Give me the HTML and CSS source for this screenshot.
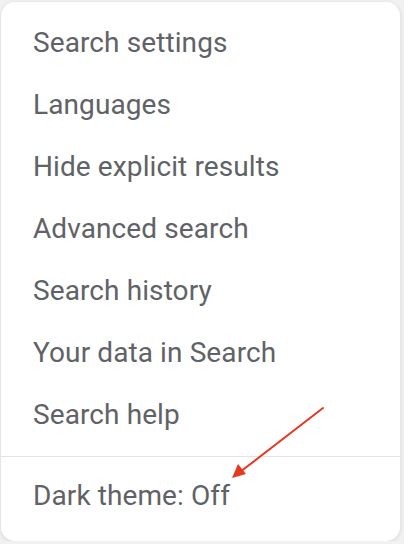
FILE: index.html
```html
<!DOCTYPE html>
<html>
  <head>
    <meta charset="utf-8" />
    <title>Search menu</title>
    <meta name="viewport" content="width=device-width, initial-scale=1" />
    <link rel="stylesheet" href="styles.css">
  </head>
  <body>
    <div class="menu">
      <ul class="menu-list">
        <li class="menu-item">Search settings</li>
        <li class="menu-item">Languages</li>
        <li class="menu-item">Hide explicit results</li>
        <li class="menu-item">Advanced search</li>
        <li class="menu-item">Search history</li>
        <li class="menu-item">Your data in Search</li>
        <li class="menu-item">Search help</li>
      </ul>
      <div class="menu-footer">
        <div class="menu-item">Dark theme: Off</div>
      </div>
      <!-- annotation arrow -->
      <svg class="arrow" width="404" height="544" viewBox="0 0 404 544">
        <line x1="323" y1="408" x2="240" y2="472" stroke="#e5381e" stroke-width="2" stroke-linecap="round" />
        <polygon points="232,478 238,464 246,474" fill="#e5381e" />
      </svg>
    </div>
  </body>
</html>
```

FILE: styles.css
```css
body {
  margin: 0;
  background-color: #f1f1f1;
  font-family: Roboto, "Noto Sans", sans-serif;
}
.menu {
  width: 399px;
  height: 539px;
  margin: 2px 0 0 1px;
  background-color: #fff;
  border-radius: 14px;
  box-shadow: 0 1px 4px rgba(0, 0, 0, 0.12);
  box-sizing: border-box;
}
.menu-list {
  list-style: none;
  margin: 0;
  padding: 10px 0 10px;
  border-bottom: 1px solid #e4e4e4;
}
.menu-item {
  height: 62px;
  line-height: 62px;
  padding-left: 32px;
  font-size: 28px;
  letter-spacing: 0.1px;
  color: #5f6266;
}
.menu-footer {
  padding-top: 8px;
}
.arrow {
  position: absolute;
  top: 0;
  left: 0;
  pointer-events: none;
}
```
